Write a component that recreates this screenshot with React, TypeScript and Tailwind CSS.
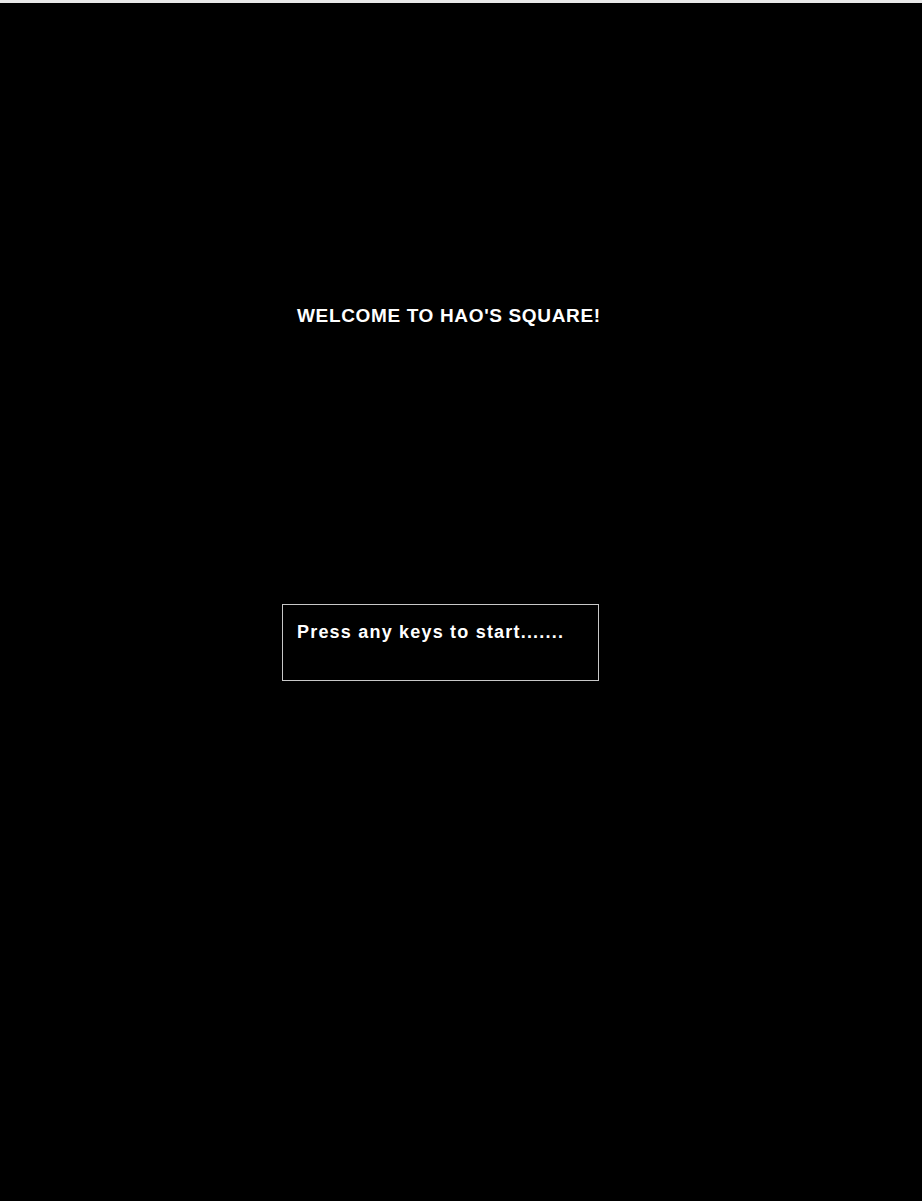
export default function App() {
  return (
    <div className="min-h-[1201px] bg-black border-t-[3px] border-[#e8e8e8] font-['Liberation_Sans',Arial,sans-serif] text-white">
      {/* Title */}
      <div className="pt-[300px] pl-[297px]">
        <h1 className="text-[19px] font-bold leading-[26px] tracking-[0.65px]">
          WELCOME TO HAO'S SQUARE!
        </h1>
      </div>

      {/* Start prompt */}
      <div className="pt-[275px] pl-[282px]">
        <div className="w-[317px] h-[77px] border border-[#c8c8c8] px-[14px] pt-[16px]">
          <p className="text-[18px] font-bold leading-[22px] tracking-[1.2px]">Press any keys to start.......</p>
        </div>
      </div>
    </div>
  );
}
